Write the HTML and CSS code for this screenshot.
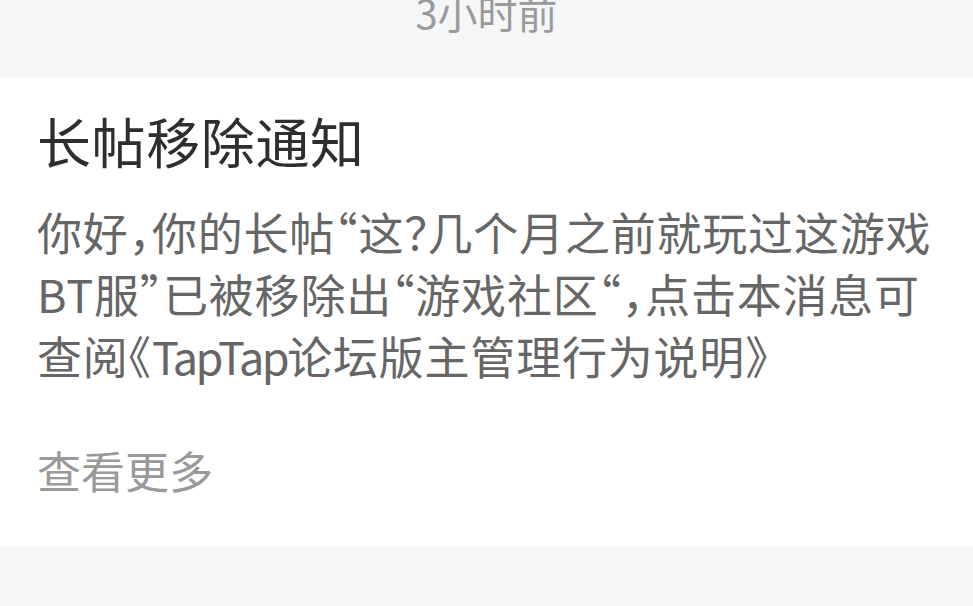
FILE: index.html
```html
<!DOCTYPE html>
<html>
<head>
<meta charset="utf-8">
<title>消息通知</title>
<meta name="viewport" content="width=device-width, initial-scale=1.0">
<link rel="stylesheet" href="styles.css">
</head>
<body>

<div class="timebar">
    <p class="time">3小时前</p>
</div>

<div class="card">
    <h2 class="title">长帖移除通知</h2>
    <p class="content">
        你好，你的长帖“这？几个月之前就玩过这游戏<br>
        BT服”已被移除出“游戏社区“，点击本消息可<br>
        查阅《<span class="latin">TapTap</span>论坛版主管理行为说明》
    </p>
    <p class="more">查看更多</p>
</div>

</body>
</html>
```

FILE: styles.css
```css
html, body
{
    margin: 0;
    padding: 0;
    background-color: #f5f6f8;
    font-family: "Noto Sans CJK SC", "Noto Sans", sans-serif;
}

p, h2
{
    margin: 0;
}

.timebar {
    height: 78px;
    overflow: hidden;
    text-align: center;
}

.time {
    margin-top: -8px;
    font-size: 40px;
    line-height: 40px;
    color: #9a9a9a;
}

.card {
    background-color: #fff;
    padding: 36px 20px 46px 37px;
}

.title {
    font-size: 54px;
    line-height: 54px;
    font-weight: normal;
    color: #2e2e2e;
    letter-spacing: 0.6px;
}

.content {
    margin-top: 33px;
    font-size: 45px;
    line-height: 62px;
    letter-spacing: 0.8px;
    color: #666;
    white-space: nowrap;
    font-feature-settings: "halt";
}

.latin {
    letter-spacing: -2.5px;
}

.more {
    margin-top: 52px;
    font-size: 44px;
    line-height: 62px;
    color: #9a9a9a;
}
```
